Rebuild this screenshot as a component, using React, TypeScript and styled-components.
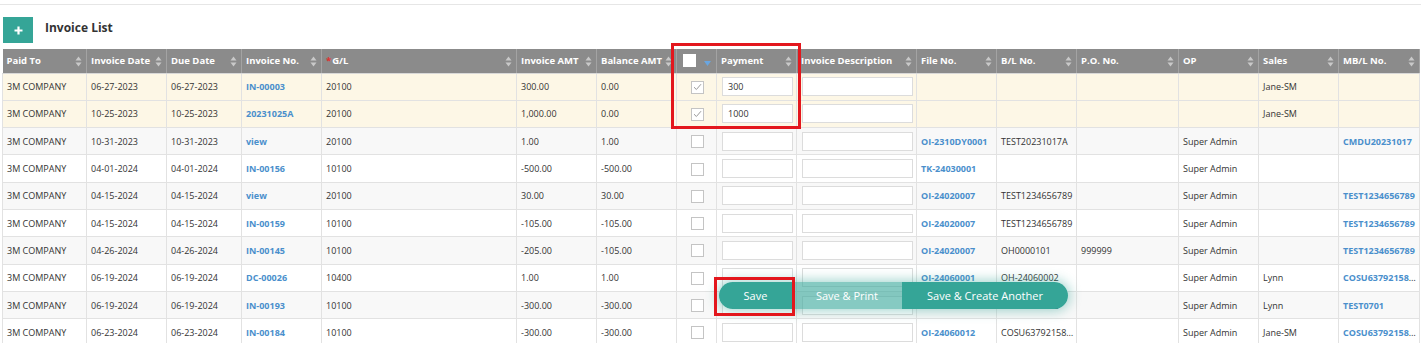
import React from "react";
import styled, { createGlobalStyle } from "styled-components";

const Global = createGlobalStyle`
  html, body { margin: 0; padding: 0; background: #fff; }
  body { font-family: "Open Sans", "Noto Sans", Arial, sans-serif; color: #333; }
  * { box-sizing: border-box; }
`;

const Page = styled.div`
  position: relative;
  width: 1421px;
  height: 343px;
  overflow: hidden;
  padding: 4px 2px 0 2px;
`;

const TopRule = styled.div`
  border-top: 1px solid #e6e6e6;
  margin: 0 -2px;
`;

const Toolbar = styled.div`
  display: flex;
  align-items: center;
  gap: 12px;
  margin-top: 12px;
  padding-left: 1px;
  height: 26px;
`;

const AddButton = styled.button`
  width: 30px;
  height: 26px;
  border: none;
  background: #35a597;
  color: #fff;
  display: flex;
  align-items: center;
  justify-content: center;
  padding: 0;
`;

const Title = styled.div`
  font-weight: 700;
  font-size: 12px;
  color: #333;
  margin-top: -5px;
`;

const Table = styled.table`
  margin-top: 6px;
  border-collapse: collapse;
  table-layout: fixed;
  width: 1417px;
  font-size: 9px;
`;

const Th = styled.th`
  position: relative;
  height: 24px;
  background: #8b8b8b;
  color: #fff;
  font-weight: 700;
  font-size: 9.5px;
  text-align: left;
  padding: 0 14px 0 4px;
  border-right: 1px solid #a3a3a3;
  border-bottom: 1px solid #d8d8d8;
  white-space: nowrap;
  overflow: hidden;
`;

const SortIcon = styled.svg`
  position: absolute;
  right: 4px;
  top: 7px;
`;

const Req = styled.span`
  color: #e03030;
  font-weight: 700;
  margin-right: 1px;
`;

const Tr = styled.tr<{ $tone: "hl" | "odd" | "even" }>`
  height: 27.3px;
  background: ${(p) => (p.$tone === "hl" ? "#fdf7e6" : p.$tone === "odd" ? "#f8f8f8" : "#ffffff")};
`;

const Td = styled.td<{ $center?: boolean }>`
  border-right: 1px solid #e2e2e2;
  border-bottom: 1px solid #e2e2e2;
  padding: 0 2px 0 4px;
  white-space: nowrap;
  overflow: hidden;
  text-overflow: ellipsis;
  color: #333;
  text-align: ${(p) => (p.$center ? "center" : "left")};
  &:first-child { border-left: 1px solid #e2e2e2; }
`;

const Link = styled.span`
  color: #4a8fcc;
  font-weight: 700;
`;

const Input = styled.div`
  width: 71px;
  height: 19px;
  border: 1px solid #dcdcdc;
  background: #fff;
  padding-left: 5px;
  line-height: 17px;
  font-size: 9px;
  color: #333;
  margin-left: 1px;
`;

const WideInput = styled(Input)`
  width: 111px;
`;

const Box = styled.span<{ $header?: boolean }>`
  display: inline-flex;
  align-items: center;
  justify-content: center;
  width: 13px;
  height: 13px;
  border: 1px solid ${(p) => (p.$header ? "#fff" : "#c4c4c4")};
  background: #fff;
  vertical-align: middle;
`;

const HeadCheck = styled.div`
  display: flex;
  align-items: center;
  justify-content: space-between;
  padding: 0 3px 0 2px;
`;

const ActionBar = styled.div`
  position: absolute;
  left: 719px;
  top: 282px;
  height: 27px;
  display: flex;
  border-radius: 14px;
  overflow: hidden;
  box-shadow: 0 0 12px 2px rgba(53, 165, 151, 0.45);
`;

const ActionBtn = styled.div<{ $w: number; $light?: boolean }>`
  width: ${(p) => p.$w}px;
  display: flex;
  align-items: center;
  justify-content: center;
  color: #fff;
  font-size: 11px;
  background: ${(p) => (p.$light ? "rgba(60, 170, 156, 0.62)" : "#35a597")};
`;

const Highlight = styled.div<{ $x: number; $y: number; $w: number; $h: number }>`
  position: absolute;
  left: ${(p) => p.$x}px;
  top: ${(p) => p.$y}px;
  width: ${(p) => p.$w}px;
  height: ${(p) => p.$h}px;
  border: 3px solid #e3171d;
  pointer-events: none;
`;

const cols = [84, 80, 75, 80, 195, 80, 80, 40, 80, 120, 80, 80, 102, 80, 80, 81];

const Sort = () => (
  <SortIcon width="7" height="11" viewBox="0 0 7 11">
    <path d="M3.5 0.5 L6.5 4.5 L0.5 4.5 Z" fill="#c9c9c9" />
    <path d="M3.5 10.5 L6.5 6.5 L0.5 6.5 Z" fill="#c9c9c9" />
  </SortIcon>
);

const Check = () => (
  <svg width="9" height="8" viewBox="0 0 9 8">
    <path d="M1 4.2 L3.4 6.5 L8 1.2" fill="none" stroke="#9a9a9a" strokeWidth="1" />
  </svg>
);

type Row = {
  date: string;
  inv: string;
  gl: string;
  amt: string;
  bal: string;
  checked?: boolean;
  pay?: string;
  file?: string;
  bl?: string;
  po?: string;
  op?: string;
  sales?: string;
  mbl?: string;
  hl?: boolean;
};

const rows: Row[] = [
  { date: "06-27-2023", inv: "IN-00003", gl: "20100", amt: "300.00", bal: "0.00", checked: true, pay: "300", sales: "Jane-SM", hl: true },
  { date: "10-25-2023", inv: "20231025A", gl: "20100", amt: "1,000.00", bal: "0.00", checked: true, pay: "1000", sales: "Jane-SM", hl: true },
  { date: "10-31-2023", inv: "view", gl: "20100", amt: "1.00", bal: "1.00", file: "OI-2310DY0001", bl: "TEST20231017A", op: "Super Admin", mbl: "CMDU20231017" },
  { date: "04-01-2024", inv: "IN-00156", gl: "10100", amt: "-500.00", bal: "-500.00", file: "TK-24030001", op: "Super Admin" },
  { date: "04-15-2024", inv: "view", gl: "20100", amt: "30.00", bal: "30.00", file: "OI-24020007", bl: "TEST1234656789", op: "Super Admin", mbl: "TEST1234656789" },
  { date: "04-15-2024", inv: "IN-00159", gl: "10100", amt: "-105.00", bal: "-105.00", file: "OI-24020007", bl: "TEST1234656789", op: "Super Admin", mbl: "TEST1234656789" },
  { date: "04-26-2024", inv: "IN-00145", gl: "10100", amt: "-205.00", bal: "-105.00", file: "OI-24020007", bl: "OH0000101", po: "999999", op: "Super Admin", mbl: "TEST1234656789" },
  { date: "06-19-2024", inv: "DC-00026", gl: "10400", amt: "1.00", bal: "1.00", file: "OI-24060001", bl: "OH-24060002", op: "Super Admin", sales: "Lynn", mbl: "COSU6379215823" },
  { date: "06-19-2024", inv: "IN-00193", gl: "10100", amt: "-300.00", bal: "-300.00", file: "OI-24060001", bl: "OH-24060002", op: "Super Admin", sales: "Lynn", mbl: "TEST0701" },
  { date: "06-23-2024", inv: "IN-00184", gl: "10100", amt: "-300.00", bal: "-300.00", file: "OI-24060012", bl: "COSU6379215823", op: "Super Admin", sales: "Jane-SM", mbl: "COSU6379215823" },
];

const headers = ["Paid To", "Invoice Date", "Due Date", "Invoice No.", "G/L", "Invoice AMT", "Balance AMT", "", "Payment", "Invoice Description", "File No.", "B/L No.", "P.O. No.", "OP", "Sales", "MB/L No."];

export default function App() {
  return (
    <>
      <Global />
      <Page>
        <TopRule />
        <Toolbar>
          <AddButton aria-label="add">
            <svg width="9" height="9" viewBox="0 0 9 9">
              <path d="M4.5 0.5 V8.5 M0.5 4.5 H8.5" stroke="#fff" strokeWidth="2.2" />
            </svg>
          </AddButton>
          <Title>Invoice List</Title>
        </Toolbar>
        <Table>
          <colgroup>
            {cols.map((w, i) => (
              <col key={i} style={{ width: w }} />
            ))}
          </colgroup>
          <thead>
            <tr>
              {headers.map((h, i) =>
                i === 7 ? (
                  <Th key={i} style={{ paddingRight: 2 }}>
                    <HeadCheck>
                      <Box $header />
                      <svg width="7" height="5" viewBox="0 0 7 5" style={{ marginTop: 5 }}>
                        <path d="M0 0 H7 L3.5 5 Z" fill="#6aa6e0" />
                      </svg>
                    </HeadCheck>
                  </Th>
                ) : (
                  <Th key={i}>
                    {h === "G/L" && <Req>*</Req>}
                    {h}
                    <Sort />
                  </Th>
                )
              )}
            </tr>
          </thead>
          <tbody>
            {rows.map((r, i) => (
              <Tr key={i} $tone={r.hl ? "hl" : i % 2 === 0 ? "odd" : "even"}>
                <Td>3M COMPANY</Td>
                <Td>{r.date}</Td>
                <Td>{r.date}</Td>
                <Td>
                  <Link>{r.inv}</Link>
                </Td>
                <Td>{r.gl}</Td>
                <Td>{r.amt}</Td>
                <Td>{r.bal}</Td>
                <Td $center>
                  <Box>{r.checked && <Check />}</Box>
                </Td>
                <Td>
                  <Input>{r.pay ?? ""}</Input>
                </Td>
                <Td>
                  <WideInput />
                </Td>
                <Td>{r.file && <Link>{r.file}</Link>}</Td>
                <Td>{r.bl ?? ""}</Td>
                <Td>{r.po ?? ""}</Td>
                <Td>{r.op ?? ""}</Td>
                <Td>{r.sales ?? ""}</Td>
                <Td>{r.mbl && <Link>{r.mbl}</Link>}</Td>
              </Tr>
            ))}
          </tbody>
        </Table>
        <ActionBar>
          <ActionBtn $w={73}>Save</ActionBtn>
          <ActionBtn $w={110} $light>
            Save &amp; Print
          </ActionBtn>
          <ActionBtn $w={166}>Save &amp; Create Another</ActionBtn>
        </ActionBar>
        <Highlight $x={671} $y={43} $w={130} $h={86} />
        <Highlight $x={714} $y={277} $w={81} $h={39} />
      </Page>
    </>
  );
}
